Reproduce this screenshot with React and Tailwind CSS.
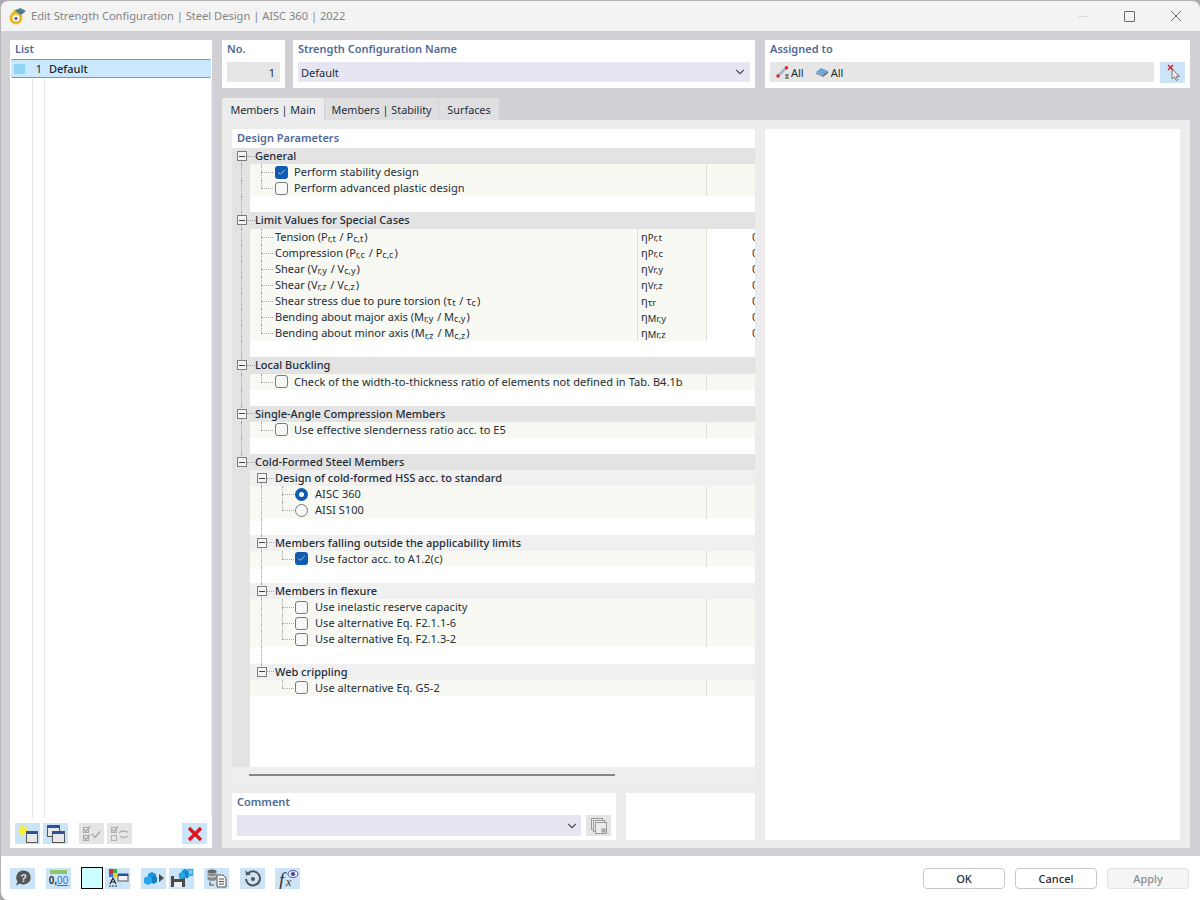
import { ChevronDown, Check } from "lucide-react"

const S = ({ children }) => <sub className="text-[9px] mr-px">{children}</sub>

const tree = [
    { type: 'group', label: 'General', trunk: 'start' },
    { type: 'check', checked: true, label: 'Perform stability design', trunk: 'full', leaf: 'mid', divider: true },
    { type: 'check', label: 'Perform advanced plastic design', trunk: 'full', leaf: 'end', divider: true },
    { type: 'blank', trunk: 'full' },
    { type: 'group', label: 'Limit Values for Special Cases', trunk: 'full' },
    { type: 'value', label: <>Tension (P<S>r,t</S> / P<S>c,t</S>)</>, sym: 'Pr,t', trunk: 'full', leaf: 'mid' },
    { type: 'value', label: <>Compression (P<S>r,c</S> / P<S>c,c</S>)</>, sym: 'Pr,c', trunk: 'full', leaf: 'mid' },
    { type: 'value', label: <>Shear (V<S>r,y</S> / V<S>c,y</S>)</>, sym: 'Vr,y', trunk: 'full', leaf: 'mid' },
    { type: 'value', label: <>Shear (V<S>r,z</S> / V<S>c,z</S>)</>, sym: 'Vr,z', trunk: 'full', leaf: 'mid' },
    { type: 'value', label: <>Shear stress due to pure torsion (τ<S>t</S> / τ<S>c</S>)</>, sym: 'τr', trunk: 'full', leaf: 'mid' },
    { type: 'value', label: <>Bending about major axis (M<S>r,y</S> / M<S>c,y</S>)</>, sym: 'Mr,y', trunk: 'full', leaf: 'mid' },
    { type: 'value', label: <>Bending about minor axis (M<S>r,z</S> / M<S>c,z</S>)</>, sym: 'Mr,z', trunk: 'full', leaf: 'end' },
    { type: 'blank', trunk: 'full' },
    { type: 'group', label: 'Local Buckling', trunk: 'full' },
    { type: 'check', label: 'Check of the width-to-thickness ratio of elements not defined in Tab. B4.1b', trunk: 'full', leaf: 'end', divider: true },
    { type: 'blank', trunk: 'full' },
    { type: 'group', label: 'Single-Angle Compression Members', trunk: 'full' },
    { type: 'check', label: 'Use effective slenderness ratio acc. to E5', trunk: 'full', leaf: 'end', divider: true },
    { type: 'blank', trunk: 'full' },
    { type: 'group', label: 'Cold-Formed Steel Members', trunk: 'end' },
    { type: 'sub', label: 'Design of cold-formed HSS acc. to standard', sub: 'start' },
    { type: 'radio', checked: true, label: 'AISC 360', sub: 'full', leaf2: 'mid', divider: true },
    { type: 'radio', label: 'AISI S100', sub: 'full', leaf2: 'end', divider: true },
    { type: 'blank', sub: 'full' },
    { type: 'sub', label: 'Members falling outside the applicability limits', sub: 'full' },
    { type: 'check', level: 1, checked: true, label: 'Use factor acc. to A1.2(c)', sub: 'full', leaf2: 'end', divider: true },
    { type: 'blank', sub: 'full' },
    { type: 'sub', label: 'Members in flexure', sub: 'full' },
    { type: 'check', level: 1, label: 'Use inelastic reserve capacity', sub: 'full', leaf2: 'mid', divider: true },
    { type: 'check', level: 1, label: 'Use alternative Eq. F2.1.1-6', sub: 'full', leaf2: 'mid', divider: true },
    { type: 'check', level: 1, label: 'Use alternative Eq. F2.1.3-2', sub: 'full', leaf2: 'end', divider: true },
    { type: 'blank', sub: 'full' },
    { type: 'sub', label: 'Web crippling', sub: 'end' },
    { type: 'check', level: 1, label: 'Use alternative Eq. G5-2', leaf2: 'end', divider: true },
]

function Guide({ left, mode }) {
    if (!mode) return null
    return (
        <span
            className={`absolute w-0 border-l border-dotted border-[#a6a6a6] ${
                mode === 'full' ? 'top-0 bottom-0' : mode === 'start' ? 'top-1/2 bottom-0' : 'top-0 bottom-1/2'
            } ${left}`}
        />
    )
}

function Toggle() {
    return (
        <span className="w-[10px] h-[10px] shrink-0 border border-[#7d7d7d] bg-[#f4f4f4] flex items-center justify-center relative z-10">
            <span className="w-[6px] h-px bg-[#444]" />
        </span>
    )
}

function CheckBox({ checked }) {
    return checked ? (
        <span className="w-[13px] h-[13px] shrink-0 rounded-[3px] bg-[#0f5cb4] flex items-center justify-center">
            <Check size={9} strokeWidth={2} className="text-[#cfe3f7]" />
        </span>
    ) : (
        <span className="w-[13px] h-[13px] shrink-0 rounded-[3px] bg-[#f8f8f8] border-[1.5px] border-[#7a7a7a]" />
    )
}

function Radio({ checked }) {
    return checked ? (
        <span className="w-[13px] h-[13px] shrink-0 rounded-full border-[4px] border-[#0f5cb4] bg-white" />
    ) : (
        <span className="w-[13px] h-[13px] shrink-0 rounded-full border-[1.5px] border-[#7a7a7a] bg-[#f8f8f8]" />
    )
}

function TreeRow({ row }) {
    const level1 = row.type === 'radio' || row.level === 1
    return (
        <div className="relative flex h-[16.12px] shrink-0">
            <Guide left="left-[9px]" mode={row.trunk} />
            <Guide left="left-[29px]" mode={row.sub} />
            {row.leaf && (
                <>
                    <Guide left="left-[29px]" mode={row.leaf === 'mid' ? 'full' : 'end'} />
                    <span className="absolute left-[29px] w-[12px] top-1/2 border-t border-dotted border-[#a6a6a6]" />
                </>
            )}
            {row.leaf2 && (
                <>
                    <Guide left="left-[50px]" mode={row.leaf2 === 'mid' ? 'full' : 'end'} />
                    <span className="absolute left-[50px] w-[12px] top-1/2 border-t border-dotted border-[#a6a6a6]" />
                </>
            )}

            {row.type === 'group' && (
                <div className="flex-1 bg-[#e3e3e3] flex items-center pl-[5px]">
                    <Toggle />
                    <span className="w-[8px] border-t border-dotted border-[#a6a6a6]" />
                    <span className="font-medium text-[#232d38]">{row.label}</span>
                </div>
            )}

            {row.type !== 'group' && <div className="w-[18px] shrink-0 bg-[#e3e3e3]" />}

            {row.type === 'sub' && (
                <div className="flex-1 bg-[#f0f0f0] flex items-center pl-[7px]">
                    <Toggle />
                    <span className="w-[7px] border-t border-dotted border-[#a6a6a6]" />
                    <span className="font-medium text-[#232d38] ml-[1px]">{row.label}</span>
                </div>
            )}

            {row.type === 'blank' && <div className="flex-1 bg-white" />}

            {(row.type === 'check' || row.type === 'radio') && (
                <div className={`flex-1 bg-[#f8f9f3] flex items-center ${level1 ? 'pl-[45px]' : 'pl-[25px]'}`}>
                    {row.type === 'radio' ? <Radio checked={row.checked} /> : <CheckBox checked={row.checked} />}
                    <span className={`text-[#232d38] tracking-[0.06px] whitespace-nowrap flex-1 ${level1 ? 'ml-[7px]' : 'ml-[6px]'}`}>{row.label}</span>
                    <span className="w-[49px] h-full border-l border-[#dedfd8]" />
                </div>
            )}

            {row.type === 'value' && (
                <>
                    <div className="flex-1 bg-[#f8f9f3] flex items-center pl-[25px] text-[#232d38] whitespace-pre">{row.label}</div>
                    <div className="w-[70px] shrink-0 h-full bg-[#f8f9f3] border-x border-[#dedfd8] flex items-center pl-[3px] text-[#232d38]">
                        η<span className="text-[9.5px] mt-[3px]">{row.sym}</span>
                    </div>
                    <div className="w-[48px] shrink-0 bg-white overflow-hidden pl-[45px] flex items-center text-[#232d38]">0</div>
                </>
            )}
        </div>
    )
}

function IconBtn({ children, disabled, className = '' }) {
    return (
        <div className={`w-[25px] h-[21px] shrink-0 flex items-center justify-center ${disabled ? 'bg-[#e5e5e5]' : 'bg-[#cce4f7]'} ${className}`}>
            {children}
        </div>
    )
}

const NewIcon = () => (
    <svg width="24" height="20" viewBox="0 0 24 20">
        <path d="M7 0l1.300 3 3-1.300L10 4.700l3 1.300-3 1.300 1.300 3-3-1.300L7 13l-1.300-3-3 1.300L4 7.300 1 6l3-1.300-1.300-3 3 1.300z" fill="#f6ee3a" />
        <rect x="10.500" y="7.500" width="11" height="11" fill="#e8e8e8" stroke="#555" />
        <rect x="10.500" y="7.500" width="11" height="2.500" fill="#2e4f9e" />
    </svg>
)

const CopyIcon = () => (
    <svg width="20" height="20" viewBox="0 0 20 20">
        <rect x="1.500" y="1.500" width="12" height="11" fill="#e8e8e8" stroke="#555" />
        <rect x="1.500" y="1.500" width="12" height="2.500" fill="#2e4f9e" />
        <rect x="6.500" y="7.500" width="12" height="11" fill="#e8e8e8" stroke="#555" />
        <rect x="6.500" y="7.500" width="12" height="2.500" fill="#2e4f9e" />
    </svg>
)

const CheckAllIcon = () => (
    <svg width="22" height="20" viewBox="0 0 22 20" fill="none" stroke="#a8a8a8">
        <rect x="2.500" y="3.500" width="5" height="5" />
        <rect x="2.500" y="11.500" width="5" height="5" />
        <path d="M3 5.500l2 2 4-5M3 13.500l2 2 4-5M11 10l3 3.500 5-6" strokeWidth="1.300" />
    </svg>
)

const SwapIcon = () => (
    <svg width="22" height="20" viewBox="0 0 22 20" fill="none" stroke="#b0b0b0">
        <rect x="2.500" y="3.500" width="5" height="5" />
        <rect x="2.500" y="11.500" width="5" height="5" />
        <path d="M3 5.500l2 2 4-5M10 9c2-3 5-2 9-1M19 12c-3 2-6 2-8 0" strokeWidth="1.300" />
    </svg>
)

const DeleteIcon = () => (
    <svg width="16" height="16" viewBox="0 0 16 16">
        <path d="M2 2l12 12M14 2L2 14" stroke="#e3121c" strokeWidth="3.200" />
    </svg>
)

const HelpIcon = () => (
    <svg width="20" height="20" viewBox="0 0 20 20">
        <path d="M10.500 2.500a7 7 0 0 1 .5 14c-2 0-3.200-.5-4-1L3 17.500l1.500-4a7 7 0 0 1 6-11z" fill="#555" />
        <text x="10.500" y="13.500" textAnchor="middle" fontSize="11" fontWeight="700" fill="#cce4f7" fontFamily="Liberation Sans, sans-serif">?</text>
    </svg>
)

const UnitsIcon = () => (
    <div className="flex flex-col items-center w-full">
        <div className="w-[17px] h-[4px] mb-px bg-[#8cc66a]" />
        <div className="text-[10px] leading-[12px] font-bold text-[#333] font-['Liberation_Sans',sans-serif]">
            0,<span className="text-[#3a6fc4] underline font-normal">00</span>
        </div>
    </div>
)

const ColorsIcon = () => (
    <svg width="22" height="20" viewBox="0 0 22 20">
        <rect x="2" y="1" width="4" height="4" fill="#d92b2b" />
        <rect x="6" y="1" width="4" height="4" fill="#3fae3f" />
        <rect x="2" y="5" width="4" height="4" fill="#3a6fd8" />
        <rect x="6" y="5" width="4" height="4" fill="#e8d32e" />
        <path d="M3 16l3-6 3 6M4.500 14h3" fill="none" stroke="#222" strokeWidth="1.200" />
        <path d="M2 18h2M5 18h2M8 18h2" stroke="#333" />
        <rect x="11" y="6" width="10" height="7" fill="#f2f2f2" stroke="#555" />
        <rect x="11" y="6" width="10" height="2" fill="#2e4f9e" />
    </svg>
)

const Cubes = ({ x = 0, y = 0 }) => (
    <g transform={`translate(${x} ${y})`} fill="#1793d8">
        <path d="M5 3l4-2 4 2v4l-4 2-4-2z" />
        <path d="M1 7l4-2 4 2v5l-4 2-4-2z" fill="#2aa6e6" />
        <path d="M9 6l3-1 2 1v5l-3 2-2-1z" fill="#1480c4" />
    </g>
)

const ExportIcon = () => (
    <svg width="22" height="20" viewBox="0 0 22 20">
        <Cubes y="3" />
        <path d="M16 6l5 4-5 4z" fill="#4d4d4d" />
    </svg>
)

const SaveIcon = () => (
    <svg width="24" height="20" viewBox="0 0 24 20">
        <path d="M1 8h12l2 2v9H1z" fill="#4a4a4a" />
        <rect x="4" y="8" width="6" height="3" fill="#cce4f7" />
        <rect x="4" y="14" width="8" height="5" fill="#efefef" />
        <g transform="translate(8 0) scale(0.8)">
            <Cubes />
        </g>
        <rect x="18" y="1" width="5" height="7" fill="#38a8e6" />
        <path d="M19 3h3M19 5h3" stroke="#cce4f7" />
    </svg>
)

const DbIcon = () => (
    <svg width="22" height="20" viewBox="0 0 22 20">
        <ellipse cx="6" cy="3.500" rx="4.500" ry="2" fill="#666" />
        <path d="M1.500 4v7c0 1 2 2 4.500 2s4.500-1 4.500-2V4c0 1-2 2-4.500 2S1.500 5 1.500 4z" fill="#8a8a8a" />
        <path d="M1.500 7c0 1 2 2 4.500 2s4.500-1 4.500-2" fill="none" stroke="#e5e5e5" />
        <path d="M4 14v3h4" fill="none" stroke="#555" strokeWidth="1.200" />
        <path d="M11 7h6l3 3v9h-9z" fill="#f5f5f5" stroke="#555" />
        <path d="M13 11h5M13 13.500h5M13 16h5" stroke="#555" />
    </svg>
)

const ResetIcon = () => (
    <svg width="20" height="20" viewBox="0 0 20 20" fill="none">
        <path d="M4.500 6a7 7 0 1 1-1.500 5" stroke="#555" strokeWidth="2" />
        <path d="M2.500 2.500l.5 5 5-1z" fill="#555" />
        <circle cx="10" cy="11" r="2" fill="#555" />
    </svg>
)

const FormulaIcon = () => (
    <svg width="24" height="21" viewBox="0 0 24 21">
        <text x="3" y="18" fontSize="19" fontStyle="italic" fill="#333" fontFamily="Liberation Serif, serif">f</text>
        <text x="10" y="18" fontSize="12" fontStyle="italic" fill="#333" fontFamily="Liberation Serif, serif">x</text>
        <ellipse cx="17" cy="6" rx="5" ry="3.500" fill="#eaeaf6" stroke="#5252a8" />
        <circle cx="17" cy="6" r="2" fill="#4a3f9f" />
    </svg>
)

const MembersIcon = () => (
    <svg width="14" height="13" viewBox="0 0 14 13">
        <path d="M2 10L10 2" stroke="#a7b5c9" strokeWidth="2.500" />
        <circle cx="2" cy="10" r="1.700" fill="#d8232a" />
        <circle cx="10.500" cy="1.800" r="1.700" fill="#d8232a" />
        <path d="M9 9h4M9 12h4M11 9v3" stroke="#333" strokeWidth="0.900" />
    </svg>
)

const SurfaceIcon = () => (
    <svg width="14" height="11" viewBox="0 0 14 11">
        <path d="M1 5l5-4 7 3-5 4z" fill="#6aa6d8" />
        <path d="M1 5l7 3v2L1 7z" fill="#8f9aa8" />
        <path d="M8 8l5-4v2l-5 4z" fill="#5a6a7a" />
    </svg>
)

const PickIcon = () => (
    <svg width="18" height="20" viewBox="0 0 18 20">
        <path d="M8 6v10l2.500-2 1.500 3.500 1.700-.8-1.500-3.400h3.300z" fill="#eeeeee" stroke="#777" />
        <path d="M4 2l5 5M9 2L4 7" stroke="#e3121c" strokeWidth="1.300" />
    </svg>
)

const CommentIcon = () => (
    <svg width="18" height="18" viewBox="0 0 18 18" fill="#ececec" stroke="#9a9a9a">
        <rect x="1.500" y="1.500" width="11" height="11" />
        <rect x="3.500" y="3.500" width="11" height="11" />
        <rect x="5.500" y="5.500" width="11" height="11" />
        <rect x="12" y="12" width="3" height="3" fill="#bbb" />
    </svg>
)

const AppIcon = () => (
    <svg width="17" height="17" viewBox="0 0 17 17">
        <circle cx="7" cy="10" r="5" fill="none" stroke="#e9b91f" strokeWidth="3" />
        <circle cx="7" cy="10.500" r="1.300" fill="#2b3a4a" />
        <path d="M4 7c.5-3 2-4.500 4.500-5" fill="none" stroke="#e9b91f" strokeWidth="2.500" />
        <path d="M6 3l5-3 6 3-5 4z" fill="#4d7b8e" />
    </svg>
)

export default function App() {
    return (
        <div className="w-[1200px] h-[900px] overflow-hidden bg-[#a9a9a9] font-['Noto_Sans',sans-serif] text-[11px] leading-[16px]">
            <div className="h-full flex flex-col rounded-t-[8px] rounded-bl-[8px] overflow-hidden border-t border-l border-[#b5b5b5]">
                <div className="h-[30px] shrink-0 bg-[#f3f3f3] flex items-center pl-[8px]">
                    <AppIcon />
                    <span className="ml-[5px] text-[11.1px] text-[#858585]">Edit Strength Configuration | Steel Design | AISC 360 | 2022</span>
                    <div className="ml-auto flex items-center pr-[18px] gap-[35px]">
                        <span className="w-[11px] h-px bg-[#d8d8d8]" />
                        <span className="w-[11px] h-[11px] rounded-[1px] border border-[#6b6b6b]" />
                        <svg width="12" height="12" viewBox="0 0 12 12"><path d="M1 1l10 10M11 1L1 11" stroke="#6b6b6b" /></svg>
                    </div>
                </div>

                <div className="flex-1 bg-[#d0d0d5] flex gap-[10px] pl-[9px] pr-[10px] pt-[9px] pb-[8px] min-h-0">
                    {/* list */}
                    <div className="w-[202px] shrink-0 bg-white flex flex-col">
                        <div className="h-[19px] shrink-0 pl-[5px] pt-px font-semibold text-[#4f6a96]">List</div>
                        <div className="h-[19px] shrink-0 mx-px rounded-[2px] bg-[#cce8ff] border-y-[1.5px] border-[#4aa3e6] flex items-center text-[#1b2530]">
                            <span className="w-[11px] h-[10px] ml-[3px] bg-[#8ed4f5]" />
                            <span className="w-[14px] ml-[3px] text-right">1</span>
                            <span className="ml-[7px] font-medium">Default</span>
                        </div>
                        <div className="flex-1 flex min-h-0">
                            <div className="w-[23px] border-r border-[#e6e6e6]" />
                            <div className="w-[12px] border-r border-[#e6e6e6]" />
                            <div className="ml-auto border-r border-[#eeeeee]" />
                        </div>
                        <div className="h-[30px] shrink-0 flex items-start pl-[5px] pt-[5px]">
                            <IconBtn><NewIcon /></IconBtn>
                            <IconBtn className="ml-[3px]"><CopyIcon /></IconBtn>
                            <IconBtn disabled className="ml-[11px]"><CheckAllIcon /></IconBtn>
                            <IconBtn disabled className="ml-[3px]"><SwapIcon /></IconBtn>
                            <IconBtn className="ml-[50px]"><DeleteIcon /></IconBtn>
                        </div>
                    </div>

                    {/* main */}
                    <div className="flex-1 flex flex-col min-w-0">
                        <div className="h-[48px] shrink-0 flex">
                            <div className="w-[63px] shrink-0 bg-white px-[5px] pt-[1px]">
                                <div className="h-[21px] font-semibold text-[#4f6a96]">No.</div>
                                <div className="h-[20px] bg-[#e6e6e6] flex items-center justify-end pr-[5px] pt-px text-[#232d38]">1</div>
                            </div>
                            <div className="w-[462px] shrink-0 ml-[8px] bg-white px-[5px] pt-[1px]">
                                <div className="h-[21px] font-semibold text-[#4f6a96]">Strength Configuration Name</div>
                                <div className="h-[20px] bg-[#e6e6f2] flex items-center justify-between pl-[3px] pr-[3px] text-[#232d38]">
                                    <span className="pt-px">Default</span>
                                    <ChevronDown size={14} className="text-[#555]" />
                                </div>
                            </div>
                            <div className="w-[425px] shrink-0 ml-[10px] bg-white px-[5px] pt-[1px]">
                                <div className="h-[21px] font-semibold text-[#4f6a96]">Assigned to</div>
                                <div className="flex gap-[6px]">
                                    <div className="flex-1 h-[20px] bg-[#e6e6e6] flex items-center pl-[6px] pt-px text-[#232d38]">
                                        <MembersIcon />
                                        <span className="ml-[1px]">All</span>
                                        <span className="ml-[11px]"><SurfaceIcon /></span>
                                        <span className="ml-[2px]">All</span>
                                    </div>
                                    <IconBtn className="h-[20px]"><PickIcon /></IconBtn>
                                </div>
                            </div>
                        </div>

                        {/* tabs */}
                        <div className="h-[22px] shrink-0 mt-[10px] flex gap-px text-[10.8px] text-[#232d38]">
                            <div className="w-[102px] bg-[#ececec] pt-[2px] flex items-center justify-center">Members | Main</div>
                            <div className="w-[113px] bg-[#dfdfe1] pt-[2px] flex items-center justify-center">Members | Stability</div>
                            <div className="w-[60px] bg-[#dfdfe1] pt-[2px] flex items-center justify-center">Surfaces</div>
                        </div>

                        <div className="flex-1 bg-[#ececec] pl-[10px] pr-[10px] pt-[9px] pb-[8px] flex gap-[10px] min-h-0">
                            <div className="w-[523px] shrink-0 flex flex-col">
                                <div className="flex-1 bg-white flex flex-col min-h-0">
                                    <div className="h-[19px] shrink-0 pl-[5px] pt-px font-semibold text-[#4f6a96]">Design Parameters</div>
                                    <div className="flex-1 flex flex-col min-h-0 overflow-hidden">
                                        {tree.map((row, i) => <TreeRow key={i} row={row} />)}
                                        <div className="flex-1 flex">
                                            <div className="w-[18px] bg-[#e3e3e3]" />
                                        </div>
                                    </div>
                                    <div className="h-[16px] shrink-0 bg-[#eeeeee] flex items-center pl-[17px]">
                                        <div className="w-[366px] h-[2px] bg-[#858585]" />
                                    </div>
                                </div>
                                <div className="h-[47px] shrink-0 mt-[10px] flex gap-[10px]">
                                    <div className="w-[384px] bg-white px-[5px] pt-[1px]">
                                        <div className="h-[21px] font-semibold text-[#4f6a96]">Comment</div>
                                        <div className="flex gap-[5px]">
                                            <div className="flex-1 h-[21px] bg-[#e6e6f2] flex items-center justify-end pr-[2px]">
                                                <ChevronDown size={14} className="text-[#555]" />
                                            </div>
                                            <IconBtn disabled><CommentIcon /></IconBtn>
                                        </div>
                                    </div>
                                    <div className="flex-1 bg-white" />
                                </div>
                            </div>
                            <div className="flex-1 bg-white" />
                        </div>
                    </div>
                </div>

                <div className="h-[44px] shrink-0 bg-white flex items-center pl-[9px] pr-[10px]">
                    <IconBtn><HelpIcon /></IconBtn>
                    <IconBtn className="ml-[11px]"><UnitsIcon /></IconBtn>
                    <div className="w-[22px] h-[22px] ml-[10px] bg-[#ccffff] border border-black" />
                    <IconBtn className="ml-[2px]"><ColorsIcon /></IconBtn>
                    <IconBtn className="ml-[11px]"><ExportIcon /></IconBtn>
                    <IconBtn className="ml-[3px]"><SaveIcon /></IconBtn>
                    <IconBtn className="ml-[10px]"><DbIcon /></IconBtn>
                    <IconBtn className="ml-[11px]"><ResetIcon /></IconBtn>
                    <IconBtn className="ml-[10px]"><FormulaIcon /></IconBtn>
                    <div className="ml-auto flex gap-[10px] pr-px font-medium">
                        <button className="w-[82px] h-[21px] pt-px rounded-[4px] border border-[#c8c8c8] bg-white text-[#232d38]">OK</button>
                        <button className="w-[82px] h-[21px] pt-px rounded-[4px] border border-[#c8c8c8] bg-white text-[#232d38]">Cancel</button>
                        <button className="w-[82px] h-[21px] pt-px rounded-[4px] border border-[#e2e2e2] bg-[#f5f5f5] text-[#8d8d8d]">Apply</button>
                    </div>
                </div>
            </div>
        </div>
    )
}
